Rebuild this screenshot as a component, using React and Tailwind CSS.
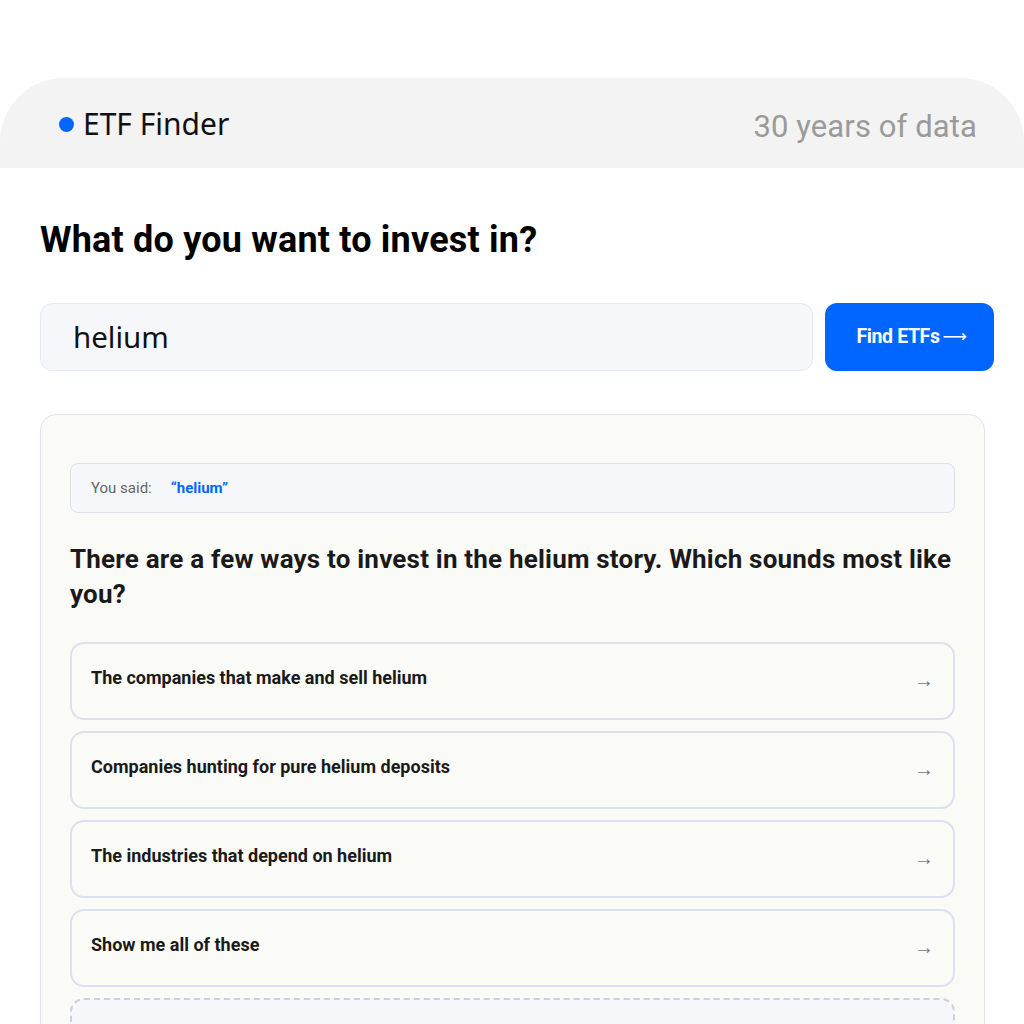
export default function App() {
  const options = [
    "The companies that make and sell helium",
    "Companies hunting for pure helium deposits",
    "The industries that depend on helium",
    "Show me all of these",
  ];
  return (
    <div className="min-h-screen bg-white pt-[78px] overflow-hidden" style={{ fontFamily: "Roboto, 'Liberation Sans', sans-serif" }}>
      <header className="h-[90px] bg-[#f3f3f3] rounded-t-[64px] flex items-center justify-between pl-[59px] pr-[47px]">
        <div className="flex items-center gap-[9px] mt-[2px]">
          <span className="w-[15px] h-[15px] rounded-full bg-[#0066ff]" />
          <span className="text-[30px] text-[#111] leading-none" style={{ fontFamily: "'Noto Sans', sans-serif" }}>ETF Finder</span>
        </div>
        <span className="text-[31px] text-[#9a9a9a] leading-none mt-[6px] tracking-[0.1px]">30 years of data</span>
      </header>
      <main className="pl-10 pr-[30px] pt-[50px]">
        <h1 className="text-[36px] leading-[44px] font-bold text-black tracking-[0.2px]">What do you want to invest in?</h1>
        <div className="flex gap-3 mt-[41px]">
          <div className="flex-1 h-[68px] rounded-[12px] bg-[#f6f7fb] border border-[#e8e9f0] flex items-center pl-[32px]">
            <span className="text-[29.5px] text-[#111]" style={{ fontFamily: "'Noto Sans', sans-serif" }}>helium</span>
          </div>
          <button className="w-[169px] h-[68px] rounded-[12px] bg-[#0066ff] text-white text-[19.5px] font-bold tracking-[-0.4px] flex items-center justify-center pl-[4px]">
            <span>Find ETFs</span>
            <span className="ml-[3px] text-[17px] font-normal" style={{ fontFamily: "'DejaVu Sans', sans-serif" }}>⟶</span>
          </button>
        </div>
        <div className="mt-[43px] w-[945px] bg-[#fafaf7] border border-[#e1e4ee] rounded-[16px] px-[29px] pt-[48px] pb-10">
          <div className="h-[50px] rounded-[8px] bg-[#f6f7fb] border border-[#dde0ea] flex items-center pl-[20px] text-[15px]">
            <span className="text-[#666]">You said:</span>
            <span className="ml-[19px] text-[#0066ff] font-bold">“helium”</span>
          </div>
          <p className="mt-[29px] text-[26px] leading-[35px] font-bold text-[#1a1a1a] tracking-[0.2px]">There are a few ways to invest in the helium story. Which sounds most like you?</p>
          <div className="mt-[30px] flex flex-col gap-[11px]">
            {options.map((o) => (
              <div key={o} className="h-[78px] rounded-[14px] border-2 border-[#dde0ee] flex items-center justify-between pl-[19px] pr-[19px]">
                <span className="text-[18px] font-bold text-[#1a1a1a] mb-[8px]">{o}</span>
                <span className="text-[20px] leading-none text-[#777] mb-[2px]">→</span>
              </div>
            ))}
            <div className="h-[90px] rounded-[14px] border-2 border-dashed border-[#cdd0da] bg-[#f6f7fb]" />
          </div>
        </div>
      </main>
    </div>
  );
}
